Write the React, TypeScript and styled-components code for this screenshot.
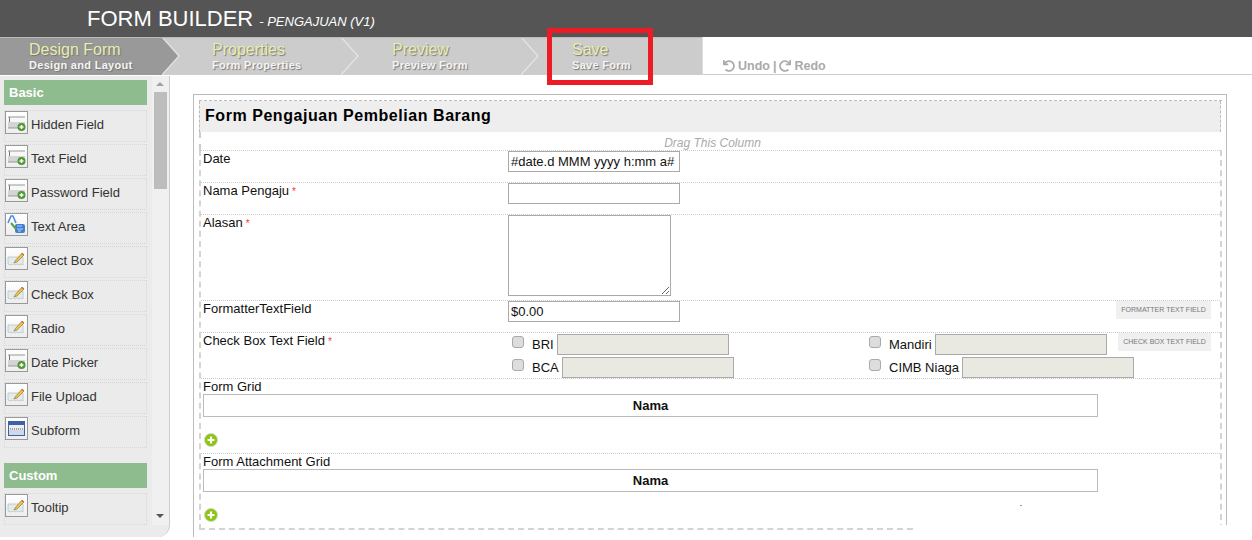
import React from "react";
import styled, { createGlobalStyle } from "styled-components";
import { FaUndo, FaRedo } from "react-icons/fa";

const Global = createGlobalStyle`
  html, body { margin: 0; padding: 0; background: #fff; }
  body { font-family: "Liberation Sans", Arial, sans-serif; }
`;

const Page = styled.div`
  position: relative;
  width: 1252px;
  height: 540px;
  overflow: hidden;
  background: #fff;
`;

const Header = styled.header`
  height: 37px;
  background: #555;
  color: #fff;
  padding-left: 87px;
  display: flex;
  align-items: baseline;
  box-sizing: border-box;
  line-height: 37px;
`;
const AppTitle = styled.span`
  font-size: 22px;
`;
const AppSubtitle = styled.span`
  font-size: 13px;
  font-style: italic;
  margin-left: 6px;
`;

const Toolbar = styled.nav`
  display: flex;
  height: 39px;
  box-sizing: border-box;
`;
const Steps = styled.div`
  display: flex;
  flex: none;
  width: 702px;
  height: 38px;
  background: #ccc;
  border-top: 1px solid #bbb;
  box-sizing: border-box;
  overflow: hidden;
`;
const Step = styled.div<{ $first?: boolean }>`
  position: relative;
  flex: none;
  box-sizing: border-box;
  width: ${(p) => (p.$first ? 183 : 180)}px;
  padding: 2px 0 0 29px;
`;
const StepShape = styled.svg`
  position: absolute;
  left: 0;
  top: -1px;
`;
const StepChevron = styled.svg<{ $first?: boolean }>`
  position: absolute;
  right: ${(p) => (p.$first ? 3 : 4)}px;
  top: -1px;
`;
const StepTitle = styled.div`
  position: relative;
  font-size: 16px;
  line-height: 19px;
  color: #e6edae;
  text-shadow: 1px 1px 1px #777;
`;
const StepSub = styled.div`
  position: relative;
  font-size: 11px;
  line-height: 13px;
  font-weight: bold;
  letter-spacing: 0.3px;
  color: #f4f4f4;
  text-shadow: 1px 1px 1px #777;
`;
const History = styled.div`
  flex: 1;
  border-bottom: 1px solid #ccc;
  border-left: 1px solid #ddd;
  height: 38px;
  box-sizing: border-box;
  padding: 20px 0 0 20px;
  font-size: 12.5px;
  font-weight: bold;
  line-height: 16px;
  color: #aaa;
  display: flex;
  align-items: center;
  gap: 3px;
`;
const Highlight = styled.div`
  position: absolute;
  left: 547px;
  top: 28px;
  width: 106px;
  height: 57px;
  box-sizing: border-box;
  border: 5px solid #ed1c24;
`;

const Body = styled.div`
  display: flex;
  height: 464px;
`;
const Sidebar = styled.aside`
  position: relative;
  width: 170px;
  height: 461px;
  box-sizing: border-box;
  flex: none;
  background: #ebebeb;
  border-right: 1px solid #ccc;
  border-bottom-right-radius: 12px;
  padding: 4px 0 0 4px;
`;
const Scrollbar = styled.div`
  position: absolute;
  left: 152px;
  top: 0;
  width: 17px;
  height: 449px;
  background: #f0f0f0;
`;
const Thumb = styled.div`
  position: absolute;
  left: 2px;
  top: 16px;
  width: 13px;
  height: 97px;
  background: #bdbdbd;
`;
const Arrow = styled.div<{ $down?: boolean }>`
  position: absolute;
  left: 4px;
  ${(p) => (p.$down ? "bottom: 7px;" : "top: 6px;")}
  width: 0;
  height: 0;
  border-left: 4px solid transparent;
  border-right: 4px solid transparent;
  ${(p) => (p.$down ? "border-top: 4px solid #555;" : "border-bottom: 4px solid #a3a3a3;")}
`;
const Section = styled.div<{ $gap?: boolean }>`
  width: 143px;
  height: 25px;
  box-sizing: border-box;
  background: #8fbc8f;
  color: #fff;
  font-size: 13px;
  font-weight: bold;
  line-height: 25px;
  padding-left: 5px;
  margin: ${(p) => (p.$gap ? "15px" : "0")} 0 5px;
`;
const Item = styled.div`
  width: 143px;
  height: 32px;
  box-sizing: border-box;
  border: 1px dotted #d6d6d6;
  margin-bottom: 2px;
  display: flex;
  align-items: flex-start;
  font-size: 13px;
  line-height: 27px;
  color: #333;
`;
const IconFrame = styled.span`
  flex: none;
  width: 23px;
  height: 23px;
  box-sizing: border-box;
  border: 1px solid #999;
  background: linear-gradient(#fff, #eee);
  margin-right: 3px;
  display: flex;
  align-items: center;
  justify-content: center;
`;

const InputIcon = () => (
  <svg width="19" height="19" viewBox="0 0 19 19">
    <rect x="1" y="4" width="17" height="11" fill="#d4d4d4" />
    <rect x="1" y="4" width="17" height="5" fill="#f7f7f7" />
    <path d="M2.5 4v5" stroke="#777" />
    <path d="M1 4h17M1 15h12" stroke="#999" />
    <circle cx="14.5" cy="14" r="4" fill="#4f9a35" />
    <path d="M14.5 12v4M12.5 14h4" stroke="#fff" strokeWidth="1.4" />
  </svg>
);
const PencilIcon = () => (
  <svg width="19" height="19" viewBox="0 0 19 19">
    <path d="M1 8h15v8l-2-1-2 1-2-1-2 1-2-1-2 1-3-1z" fill="#e3ecec" stroke="#b9c4c4" strokeWidth=".8" />
    <path d="M8 12l7-8 2 2-7 7-3 1z" fill="#f1c24c" stroke="#8b6a2a" strokeWidth=".6" />
    <path d="M15 4.5l1.6 1.6" stroke="#c76a4a" strokeWidth="1.4" />
  </svg>
);
const TextAreaIcon = () => (
  <svg width="21" height="21" viewBox="0 0 21 21">
    <path d="M2 9l3-7h2l3 7" fill="none" stroke="#4f8ddb" strokeWidth="1.6" />
    <rect x="9" y="10" width="10" height="9" rx="2" fill="#3f7fd2" />
    <path d="M11 12h5M11 15h6M12 17h3" stroke="#bcd6f5" strokeWidth="1" />
    <path d="M5 9l5 6" stroke="#58a83e" strokeWidth="2" />
  </svg>
);
const SubformIcon = () => (
  <svg width="19" height="19" viewBox="0 0 19 19">
    <rect x="1.5" y="2.5" width="16" height="14" fill="#eee" stroke="#3d62a8" />
    <rect x="2" y="3" width="15" height="3" fill="#3d62a8" />
    <path d="M3 10h13" stroke="#555" strokeDasharray="1 1" />
    <rect x="2" y="11" width="15" height="5" fill="#cfd8e8" />
  </svg>
);

const basic: [string, React.FC][] = [
  ["Hidden Field", InputIcon],
  ["Text Field", InputIcon],
  ["Password Field", InputIcon],
  ["Text Area", TextAreaIcon],
  ["Select Box", PencilIcon],
  ["Check Box", PencilIcon],
  ["Radio", PencilIcon],
  ["Date Picker", InputIcon],
  ["File Upload", PencilIcon],
  ["Subform", SubformIcon],
];

const Main = styled.main`
  flex: 1;
  padding: 18px 0 0 23px;
  position: relative;
`;
const Canvas = styled.div`
  width: 1034px;
  height: 443px;
  box-sizing: border-box;
  border: 1px solid #bbb;
  border-bottom: 0;
  padding: 5px 0 0 5px;
`;
const Column = styled.div`
  width: 1023px;
  border-top: 1px dashed #bbb;
`;
const FormTitle = styled.div`
  height: 31px;
  box-sizing: border-box;
  background: #eee;
  border-left: 1px dashed #bbb;
  border-right: 1px dashed #bbb;
  margin-right: 1px;
  font-size: 16px;
  font-weight: bold;
  letter-spacing: 0.55px;
  line-height: 30px;
  padding-left: 5px;
  color: #000;
`;
const DragBar = styled.div`
  height: 18px;
  font-size: 12px;
  font-style: italic;
  color: #aaa;
  text-align: center;
  line-height: 23px;
  padding-left: 4px;
  border-left: 2px dashed #ccc;
  border-right: 2px solid transparent;
`;
const Rows = styled.div`
  border-left: 2px dashed #d4d4d4;
  border-right: 2px dashed #d4d4d4;
  border-bottom: 2px dashed #d4d4d4;
`;
const Row = styled.div<{ $height: number }>`
  position: relative;
  display: grid;
  grid-template-columns: 307px 1fr;
  height: ${(p) => p.$height}px;
  box-sizing: border-box;
  border-top: 1px dotted #ccc;
`;
const BlockRow = styled.div<{ $height: number }>`
  height: ${(p) => p.$height}px;
  box-sizing: border-box;
  border-top: 1px dotted #ccc;
`;
const Label = styled.label`
  display: block;
  padding-left: 2px;
  font-size: 13px;
  line-height: 15px;
  color: #111;
`;
const Required = styled.span`
  color: #f33;
  font-size: 10px;
  margin-left: 3px;
`;
const TextInput = styled.input`
  display: block;
  width: 172px;
  height: 21px;
  box-sizing: border-box;
  border: 1px solid #aaa;
  padding: 0 2px;
  margin: 0;
  font: 13px "Liberation Sans", Arial, sans-serif;
  color: #111;
  background: #fff;
  outline: none;
  border-radius: 0;
`;
const TextArea = styled.textarea`
  display: block;
  width: 163px;
  height: 81px;
  box-sizing: border-box;
  border: 1px solid #aaa;
  padding: 2px;
  margin: 0;
  outline: none;
`;
const CheckGrid = styled.div`
  display: grid;
  grid-template-columns: 357px 1fr;
  row-gap: 2px;
  padding: 1px 0 0 4px;
`;
const Option = styled.div`
  display: flex;
  align-items: center;
  height: 21px;
  font-size: 13px;
  color: #111;
`;
const Check = styled.input`
  appearance: none;
  width: 12px;
  height: 12px;
  box-sizing: border-box;
  margin: -5px 8px 0 0;
  border: 1px solid #aaa;
  border-radius: 3px;
  background: #ddd;
`;
const OptionInput = styled(TextInput)`
  background: #e9e9e1;
  margin-left: 3px;
`;
const Tag = styled.div<{ $width: number }>`
  position: absolute;
  right: 9px;
  top: 0;
  width: ${(p) => p.$width}px;
  height: 18px;
  background: #f0f0f0;
  color: #777;
  font-size: 7px;
  line-height: 18px;
  text-align: center;
`;
const GridHead = styled.div`
  width: 895px;
  height: 23px;
  box-sizing: border-box;
  border: 1px solid #bbb;
  margin-left: 2px;
  text-align: center;
  font-size: 13px;
  font-weight: bold;
  line-height: 21px;
  color: #111;
`;
const AddIcon = styled.svg`
  display: block;
  margin: 16px 0 0 3px;
`;
const Add = () => (
  <AddIcon width="14" height="14" viewBox="0 0 14 14">
    <circle cx="7" cy="7" r="6.5" fill="#8cc50f" stroke="#cfd8c0" strokeWidth="1" />
    <path d="M7 3.5v7M3.5 7h7" stroke="#fff" strokeWidth="2.2" />
  </AddIcon>
);
const CornerMask = styled.div`
  position: absolute;
  left: 915px;
  top: 525px;
  width: 337px;
  height: 15px;
  background: #fff;
`;
const Speck = styled.div`
  position: absolute;
  left: 1020px;
  top: 505px;
  width: 2px;
  height: 1px;
  background: #999;
`;

const stepData = [
  ["Design Form", "Design and Layout"],
  ["Properties", "Form Properties"],
  ["Preview", "Preview Form"],
  ["Save", "Save Form"],
];

const options = [["BRI"], ["Mandiri"], ["BCA"], ["CIMB Niaga"]];

export default function App() {
  return (
    <Page>
      <Global />
      <Header>
        <AppTitle>FORM BUILDER</AppTitle>
        <AppSubtitle>- PENGAJUAN (V1)</AppSubtitle>
      </Header>
      <Toolbar>
        <Steps>
          {stepData.map(([title, sub], i) => (
            <Step key={title} $first={i === 0}>
              {i === 0 && (
                <StepShape width="183" height="38" viewBox="0 0 183 38">
                  <polygon points="0,0 162,0 179,19 162,38 0,38" fill="#999" />
                </StepShape>
              )}
              {i < 3 && (
                <StepChevron $first={i === 0} width="18" height="38" viewBox="0 0 18 38">
                  <polyline points="0,0 17,19 0,38" fill="none" stroke="#e6e6e6" strokeWidth="1.2" />
                </StepChevron>
              )}
              <StepTitle>{title}</StepTitle>
              <StepSub>{sub}</StepSub>
            </Step>
          ))}
        </Steps>
        <History>
          <FaUndo size={12} />
          <span>Undo</span>
          <span>|</span>
          <FaRedo size={12} />
          <span>Redo</span>
        </History>
      </Toolbar>
      <Body>
        <Sidebar>
          <Section>Basic</Section>
          {basic.map(([name, Icon]) => (
            <Item key={name}>
              <IconFrame>
                <Icon />
              </IconFrame>
              {name}
            </Item>
          ))}
          <Section $gap>Custom</Section>
          <Item>
            <IconFrame>
              <PencilIcon />
            </IconFrame>
            Tooltip
          </Item>
          <Scrollbar>
            <Arrow />
            <Thumb />
            <Arrow $down />
          </Scrollbar>
        </Sidebar>
        <Main>
          <Canvas>
            <Column>
              <FormTitle>Form Pengajuan Pembelian Barang</FormTitle>
              <DragBar>Drag This Column</DragBar>
              <Rows>
                <Row $height={32}>
                  <Label>Date</Label>
                  <TextInput readOnly value="#date.d MMM yyyy h:mm a#" />
                </Row>
                <Row $height={32}>
                  <Label>
                    Nama Pengaju<Required>*</Required>
                  </Label>
                  <TextInput readOnly value="" />
                </Row>
                <Row $height={86}>
                  <Label>
                    Alasan<Required>*</Required>
                  </Label>
                  <TextArea readOnly value="" />
                </Row>
                <Row $height={32}>
                  <Label>FormatterTextField</Label>
                  <TextInput readOnly value="$0.00" />
                  <Tag $width={95}>FORMATTER TEXT FIELD</Tag>
                </Row>
                <Row $height={46}>
                  <Label>
                    Check Box Text Field<Required>*</Required>
                  </Label>
                  <CheckGrid>
                    {options.map(([name]) => (
                      <Option key={name}>
                        <Check type="checkbox" readOnly />
                        {name}
                        <OptionInput readOnly value="" />
                      </Option>
                    ))}
                  </CheckGrid>
                  <Tag $width={93}>CHECK BOX TEXT FIELD</Tag>
                </Row>
                <BlockRow $height={75}>
                  <Label>Form Grid</Label>
                  <GridHead>Nama</GridHead>
                  <Add />
                </BlockRow>
                <BlockRow $height={75}>
                  <Label>Form Attachment Grid</Label>
                  <GridHead>Nama</GridHead>
                  <Add />
                </BlockRow>
              </Rows>
            </Column>
          </Canvas>
        </Main>
      </Body>
      <CornerMask />
      <Speck />
      <Highlight />
    </Page>
  );
}
